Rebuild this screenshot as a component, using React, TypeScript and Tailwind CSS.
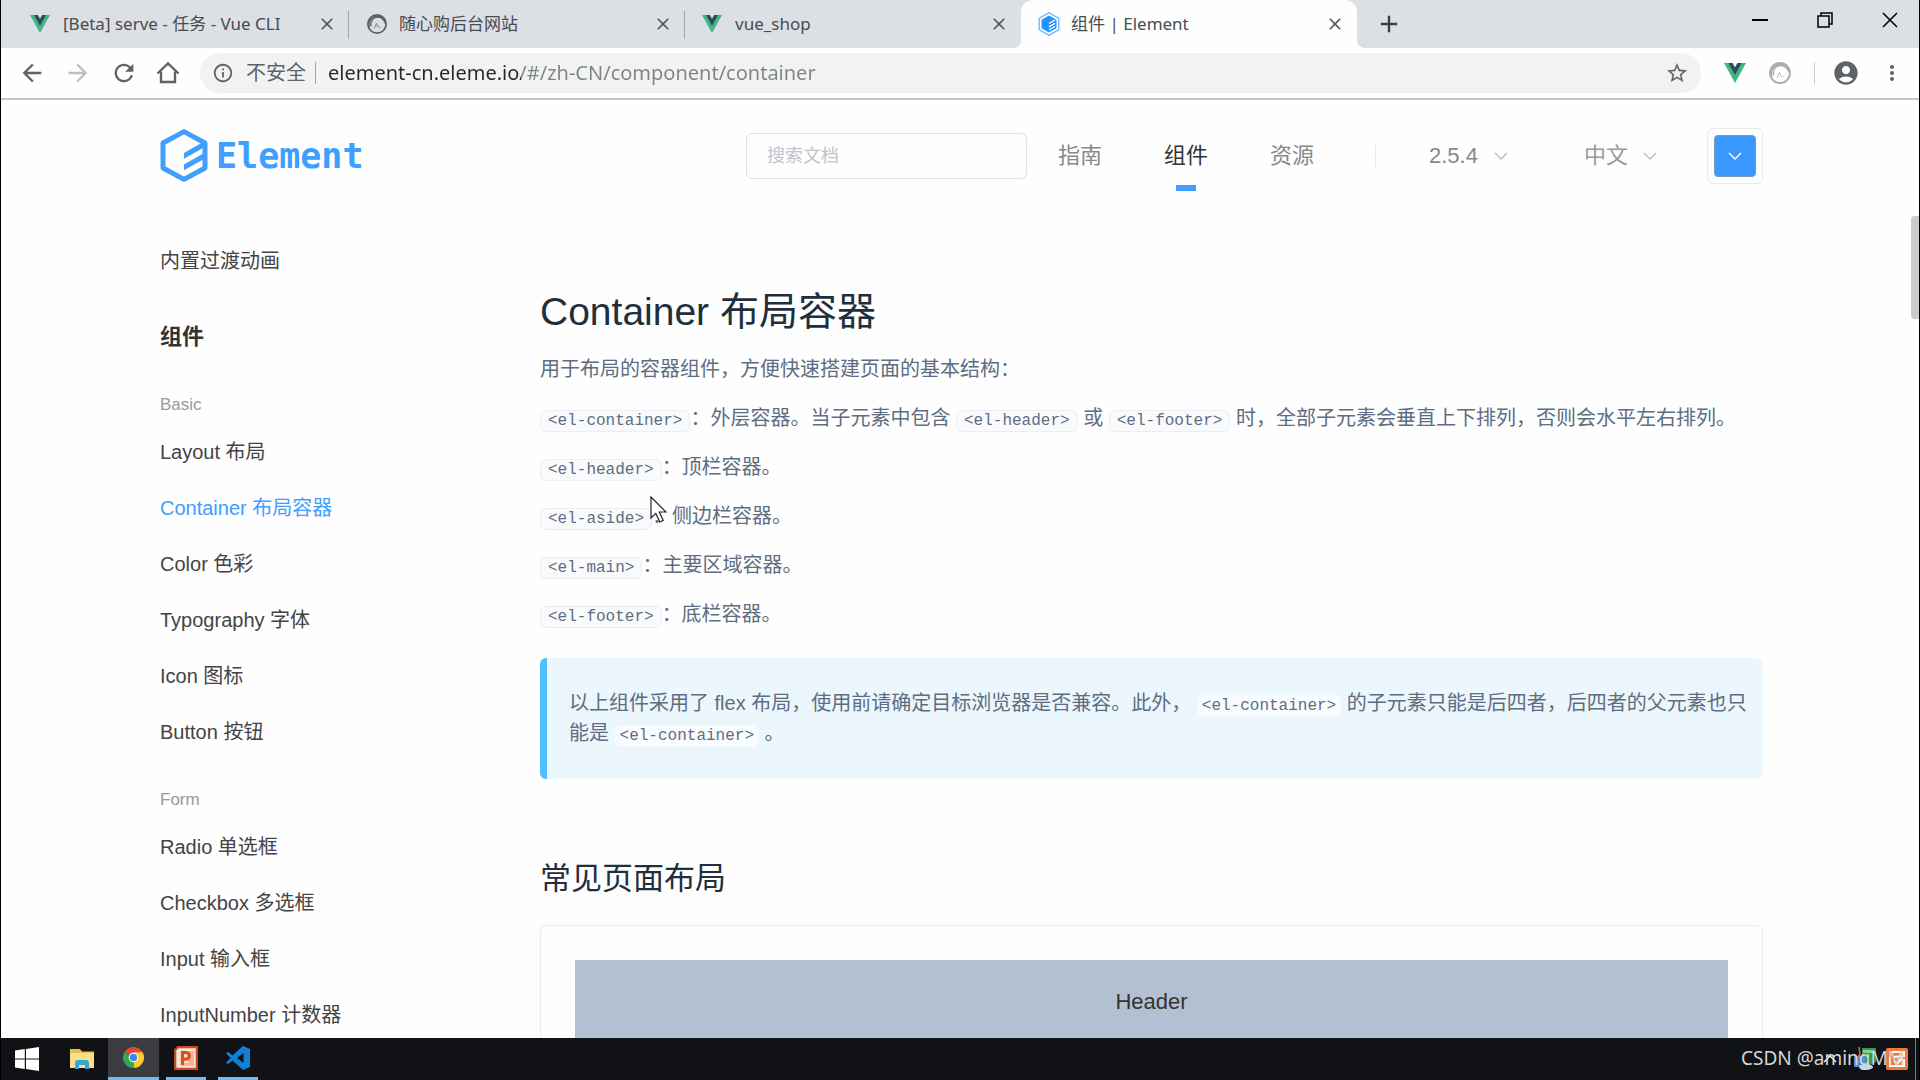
import React from "react";

import {
    MdAccountCircle,
    MdAdd,
    MdArrowBack,
    MdArrowForward,
    MdClose,
    MdInfoOutline,
    MdMoreVert,
    MdRefresh,
    MdStarBorder,
} from "react-icons/md";
import clsx from "clsx";

type IconProps = { className?: string };

const VueIcon: React.FC<IconProps> = ({ className }) => (
    <svg viewBox="0 0 24 21" preserveAspectRatio="none" className={className} aria-hidden="true">
        <path d="M0 0h9.2L12 4.8 14.8 0H24L12 21Z" fill="#41b883" />
        <path d="M4.8 0h4.4L12 4.8 14.8 0h4.4L12 12.6Z" fill="#35495e" />
    </svg>
);

const SwirlIcon: React.FC<IconProps> = ({ className }) => (
    <svg viewBox="0 0 24 24" fill="none" stroke="currentColor" strokeLinecap="round" className={className} aria-hidden="true">
        <circle cx="12" cy="12" r="10" strokeWidth="1.8" />
        <path d="M3.5 15C2 8 7 3 13 3.500c5 .5 7.500 4 8 7.500" strokeWidth="1.6" />
        <path d="M5.500 14c-1-5 2-9.500 7-9.500 4-.3 6 2 8 5" strokeWidth="1.4" />
        <path d="M9 16.500l2.500-5 1.500 4M14.500 15l1 1" strokeWidth=".8" />
    </svg>
);

const ElementIcon: React.FC<IconProps> = ({ className }) => (
    <svg viewBox="0 0 22 24" className={className} aria-hidden="true">
        <path d="M11 .8 20.800 6.300v11.400L11 23.200 1.200 17.700V6.300Z" fill="#fff" stroke="#59adff" strokeWidth="1.2" />
        <path d="M11 3.500 18.500 7.700v8.600L11 20.500 3.500 16.300V7.700Z" fill="#2492ff" />
        <path d="M11 11.500 17 8M11 14.800l6-3.500M11 18l6-3.500" stroke="#fff" strokeWidth="1.400" />
    </svg>
);

const HomeIcon: React.FC<IconProps> = ({ className }) => (
    <svg viewBox="0 0 24 24" fill="none" stroke="currentColor" strokeWidth="2.400" className={className} aria-hidden="true">
        <path d="M1.500 12.500 12 2.500l10.500 10" />
        <path d="M5 10.500V21h14V10.500" />
    </svg>
);

const LogoMark: React.FC<IconProps> = ({ className }) => (
    <svg viewBox="0 0 48 54" fill="none" className={className} aria-hidden="true">
        <path d="M24 2.600 45 14v25L24 50.400 3 39V14Z" stroke="#409eff" strokeWidth="5" strokeLinejoin="round" />
        <path d="M24 24 44 12.500v6L24 29.700ZM24 35.500 44 24v6L24 41.300Z" fill="#409eff" />
    </svg>
);

const ChevronIcon: React.FC<IconProps> = ({ className }) => (
    <svg viewBox="0 0 14 8" fill="none" stroke="currentColor" strokeWidth="1.400" className={className} aria-hidden="true">
        <path d="M1 1l6 6 6-6" />
    </svg>
);

const WindowsIcon = () => (
    <svg viewBox="0 0 24 24" className="h-6 w-6" fill="#fff" aria-hidden="true">
        <path d="M0 3.500 9.800 2.100v9.300H0ZM11 1.900 24 0v11.400H11ZM0 12.600h9.800v9.300L0 20.500ZM11 12.600h13V24l-13-1.900Z" />
    </svg>
);

const FolderIcon = () => (
    <svg viewBox="0 0 24 22" className="h-[22px] w-6" aria-hidden="true">
        <path d="M0 1h10l2 2.500h12V20H0Z" fill="#e9bf4b" />
        <path d="M0 5h24v15H0Z" fill="#fbe08a" />
        <path d="M5 21v-6q0-3 3-3h8q3 0 3 3v6h-4v-4H9v4Z" fill="#35a5d8" />
    </svg>
);

const ChromeIcon = () => (
    <svg viewBox="0 0 24 24" className="h-[21px] w-[21px]" aria-hidden="true">
        <path d="M12 12 1.600 6A12 12 0 0 1 22.400 6Z" fill="#e3473a" />
        <path d="M12 12 22.400 6A12 12 0 0 1 12 24Z" fill="#fccb31" />
        <path d="M12 12v12A12 12 0 0 1 1.600 6Z" fill="#35a553" />
        <path d="M12 6h10.400L17.200 15 12 24l3-9Z" fill="#fccb31" />
        <circle cx="12" cy="12" r="5.500" fill="#fff" />
        <circle cx="12" cy="12" r="4.300" fill="#4286f4" />
    </svg>
);

const PowerpointIcon = () => (
    <svg viewBox="0 0 24 24" className="h-6 w-6" aria-hidden="true">
        <path d="M4 1.200h18.800v21.600H1.200V4Z" fill="#fbe3d8" stroke="#cf4a1f" strokeWidth="2.200" />
        <path d="M14 5h6v15H7v-3h7Z" fill="#f4b496" />
        <path d="M8.500 19V6.500h3.500a3.300 3.300 0 0 1 0 6.600H8.500" fill="none" stroke="#d8501f" strokeWidth="3.200" />
    </svg>
);

const VscodeIcon = () => (
    <svg viewBox="0 0 24 24" className="h-6 w-6" aria-hidden="true">
        <path d="M17 0l7 3v18l-7 3L6.500 14.400 2.200 18 0 16.800 4.600 12 0 7.200 2.200 6l4.300 3.600ZM17.500 7 11 12l6.500 5Z" fill="#1380d8" />
    </svg>
);

const tabs = [
    { title: "[Beta] serve - 任务 - Vue CLI", icon: <VueIcon className="h-[18px] w-5" />, divider: true },
    { title: "随心购后台网站", icon: <SwirlIcon className="h-[22px] w-[22px] text-[#5b5e63]" />, divider: true },
    { title: "vue_shop", icon: <VueIcon className="h-[18px] w-5" /> },
    { title: "组件 | Element", icon: <ElementIcon className="h-6 w-[22px]" />, active: true },
];

const basicLinks = [
    "Layout 布局",
    "Container 布局容器",
    "Color 色彩",
    "Typography 字体",
    "Icon 图标",
    "Button 按钮",
];

const formLinks = [
    "Radio 单选框",
    "Checkbox 多选框",
    "Input 输入框",
    "InputNumber 计数器",
];

const TabStrip = () => (
    <div className="flex h-12 shrink-0 bg-[#dcdfe4] pl-3">
        {tabs.map((tab) => (
            <div
                key={tab.title}
                className={clsx(
                    "relative flex w-[336px] min-w-0 items-center pr-3 pl-[17px]",
                    tab.active && "rounded-t-xl bg-[#fdfefd]"
                )}
            >
                {tab.active && (
                    <>
                        <span className="absolute bottom-0 -left-2 size-2 bg-[radial-gradient(circle_at_0_0,transparent_8px,#fdfefd_8px)]" />
                        <span className="absolute -right-2 bottom-0 size-2 bg-[radial-gradient(circle_at_100%_0,transparent_8px,#fdfefd_8px)]" />
                    </>
                )}
                <span className="flex w-[22px] shrink-0">{tab.icon}</span>
                <span className="ml-[11px] flex-1 truncate text-[17px] leading-6 text-[#484b50]">{tab.title}</span>
                <button type="button" aria-label="关闭标签页" className="text-[#55585c]">
                    <MdClose className="size-5" />
                </button>
                {tab.divider && <span className="absolute top-[11px] right-0 h-7 w-px bg-[#a3a6aa]" />}
            </div>
        ))}
        <button type="button" aria-label="新标签页" className="ml-[18px] text-[#3c4043]">
            <MdAdd className="size-7" />
        </button>
        <div className="ml-auto flex h-10 items-center gap-[49px] pr-[21px] text-black">
            <button type="button" aria-label="最小化" className="flex size-4 items-center">
                <span className="h-[2px] w-full bg-black" />
            </button>
            <button type="button" aria-label="还原">
                <svg viewBox="0 0 16 16" fill="none" stroke="currentColor" strokeWidth="1.500" className="size-4">
                    <path d="M1 4h11v11H1ZM4 4V1h11v11h-3" />
                </svg>
            </button>
            <button type="button" aria-label="关闭">
                <svg viewBox="0 0 16 16" stroke="currentColor" strokeWidth="1.500" className="size-4">
                    <path d="M1 1l14 14M15 1 1 15" />
                </svg>
            </button>
        </div>
    </div>
);

const Toolbar = () => (
    <div className="flex h-[52px] shrink-0 items-center border-b-2 border-[#c6c8c7] pr-[15px] pl-[17px] text-[#5f6368]">
        <div className="flex items-center gap-[18px]">
            <button type="button" aria-label="后退"><MdArrowBack className="size-7" /></button>
            <button type="button" aria-label="前进" className="text-[#bcbec0]"><MdArrowForward className="size-7" /></button>
            <button type="button" aria-label="重新加载"><MdRefresh className="size-7" /></button>
            <button type="button" aria-label="主页"><HomeIcon className="size-6" /></button>
        </div>
        <div className="ml-[20px] flex h-10 flex-1 items-center rounded-full bg-[#f1f3f3] pr-3 pl-3">
            <MdInfoOutline className="size-[22px]" />
            <span className="ml-3 text-[20px] leading-7">不安全</span>
            <span className="ml-[9px] h-[22px] w-px bg-[#a3a6aa]" />
            <input
                type="text"
                aria-label="地址栏"
                defaultValue="element-cn.eleme.io/#/zh-CN/component/container"
                className="ml-3 min-w-0 flex-1 bg-[linear-gradient(90deg,#26282b_193px,#808386_193px)] bg-clip-text text-[20px] leading-7 text-transparent outline-none"
            />
            <button type="button" aria-label="收藏"><MdStarBorder className="size-6" /></button>
        </div>
        <VueIcon className="ml-[23px] h-5 w-[22px]" />
        <SwirlIcon className="ml-[22px] size-6 text-[#a9abad]" />
        <span className="ml-[22px] h-[22px] w-px bg-[#c9cbcc]" />
        <button type="button" aria-label="用户" className="ml-[17px]"><MdAccountCircle className="size-7" /></button>
        <button type="button" aria-label="菜单" className="ml-5"><MdMoreVert className="size-6" /></button>
    </div>
);

const SiteHeader = () => (
    <header className="flex h-28 items-center">
        <a href="#/zh-CN" className="flex items-center gap-2">
            <LogoMark className="h-[54px] w-12" />
            <span className="font-['DejaVu_Sans_Mono',monospace] text-[35px] leading-10 font-bold text-[#409eff]">Element</span>
        </a>
        <input
            type="text"
            aria-label="搜索文档"
            placeholder="搜索文档"
            className="ml-auto h-[46px] w-[281px] rounded-md border border-[#dcdfe6] px-5 text-[18px] outline-none placeholder:text-[#c0c4cc]"
        />
        <nav className="ml-[31px] flex items-center gap-[62px] text-[22px] leading-8 text-[#888]">
            <a href="#/zh-CN/guide">指南</a>
            <a href="#/zh-CN/component" className="relative text-[#333]">
                组件
                <span className="absolute top-[45px] left-1/2 h-[6px] w-5 -translate-x-1/2 bg-[#409eff]" />
            </a>
            <a href="#/zh-CN/resource">资源</a>
        </nav>
        <span className="ml-[61px] h-[22px] w-px bg-[#ebebeb]" />
        <label className="ml-[53px] flex items-center gap-[15px] text-[22px] leading-8 text-[#888]">
            <select aria-label="版本" className="w-[50px] appearance-none outline-none">
                <option>2.5.4</option>
            </select>
            <ChevronIcon className="h-2 w-[14px] text-[#bbb]" />
        </label>
        <label className="ml-[76px] flex items-center gap-[15px] text-[22px] leading-8 text-[#999]">
            <select aria-label="语言" className="w-11 appearance-none outline-none">
                <option>中文</option>
            </select>
            <ChevronIcon className="h-2 w-[14px] text-[#bbb]" />
        </label>
        <button type="button" aria-label="主题色" className="ml-[50px] flex size-14 items-center justify-center rounded-md border border-[#e8eaea]">
            <span className="flex size-[42px] items-center justify-center rounded-sm border border-[#7a97b8] bg-[#3a99ff]">
                <ChevronIcon className="h-2 w-[14px] text-white" />
            </span>
        </button>
    </header>
);

const NavGroup: React.FC<{ title: string, links: string[] }> = ({ title, links }) => (
    <div className="mt-5">
        <div className="text-[17px] leading-[39px] text-[#999]">{title}</div>
        {links.map((link) => (
            <a
                key={link}
                href="#/zh-CN/component"
                className={clsx(
                    "block text-[20px] leading-[56px]",
                    link.startsWith("Container") ? "text-[#409eff]" : "text-[#444]"
                )}
            >
                {link}
            </a>
        ))}
    </div>
);

const Sidebar = () => (
    <aside className="w-[380px] shrink-0 pt-[21px]">
        <a href="#/zh-CN/component/transition" className="block text-[20px] leading-[56px] text-[#444]">内置过渡动画</a>
        <div className="mt-5 text-[22px] leading-[56px] font-bold text-[#333]">组件</div>
        <NavGroup title="Basic" links={basicLinks} />
        <NavGroup title="Form" links={formLinks} />
    </aside>
);

const Code: React.FC<{ children: string, plain?: boolean }> = ({ children, plain }) => (
    <code
        className={clsx(
            "rounded-md border py-px font-['Liberation_Mono',monospace] text-[16px] leading-5 text-[#5e6d82]",
            plain ? "border-[#f6fbff] bg-[#f9fcff] px-1" : "border-[#eaeefb] bg-[#f9fafc] px-[7px]"
        )}
    >
        {children}
    </code>
);

const Content = () => (
    <main className="min-w-0 flex-1 pt-[71px] text-[20px] text-[#5e6d82]">
        <h1 className="text-[39px] leading-[58px] text-[#1f2f3d]">Container 布局容器</h1>
        <div className="mt-[14px] flex flex-col gap-5 leading-[29px]">
            <p>用于布局的容器组件，方便快速搭建页面的基本结构：</p>
            <p>
                <Code>{"<el-container>"}</Code>：外层容器。当子元素中包含 <Code>{"<el-header>"}</Code> 或 <Code>{"<el-footer>"}</Code> 时，全部子元素会垂直上下排列，否则会水平左右排列。
            </p>
            <p><Code>{"<el-header>"}</Code>：顶栏容器。</p>
            <p><Code>{"<el-aside>"}</Code>：侧边栏容器。</p>
            <p><Code>{"<el-main>"}</Code>：主要区域容器。</p>
            <p><Code>{"<el-footer>"}</Code>：底栏容器。</p>
        </div>
        <div className="mt-[29px] rounded-md border-l-[7px] border-[#50bfff] bg-[#ebf6fd] pt-[30px] pr-2 pb-[31px] pl-[22px] leading-[30px]">
            以上组件采用了 flex 布局，使用前请确定目标浏览器是否兼容。此外， <Code plain>{"<el-container>"}</Code> 的子元素只能是后四者，后四者的父元素也只能是 <Code plain>{"<el-container>"}</Code> 。
        </div>
        <h2 className="mt-[77px] text-[31px] leading-[46px] text-[#1f2f3d]">常见页面布局</h2>
        <div className="mt-[23px] rounded-md border border-[#ebebeb] p-[34px]">
            <div className="bg-[#b3c0d1] text-center text-[22px] leading-[84px] text-[#333]">Header</div>
        </div>
    </main>
);

const Taskbar = () => (
    <footer className="relative flex h-[42px] shrink-0 items-stretch bg-[#101215]">
        <button type="button" aria-label="开始" className="flex w-[51px] items-center justify-center"><WindowsIcon /></button>
        <button type="button" aria-label="文件资源管理器" className="ml-1 flex w-[52px] items-center justify-center"><FolderIcon /></button>
        <button type="button" aria-label="Chrome" className="flex w-[51px] items-center justify-center border-b-[3px] border-[#76b9ed] bg-[#3a3c3f]"><ChromeIcon /></button>
        <button type="button" aria-label="PowerPoint" className="ml-[7px] flex w-10 items-center justify-center border-b-[3px] border-[#76b9ed]"><PowerpointIcon /></button>
        <button type="button" aria-label="VS Code" className="ml-3 flex w-10 items-center justify-center border-b-[3px] border-[#76b9ed]"><VscodeIcon /></button>
        <div className="ml-auto flex items-center">
            <ChevronIcon className="h-2 w-4 rotate-180 text-white" />
            <svg viewBox="0 0 24 24" className="ml-[15px] size-6" aria-hidden="true">
                <path d="M9 1h14v14l-6 3-8-5Z" fill="#2f9a50" />
                <path d="M10 3h11v3H10Z" fill="#7fd08f" />
                <rect x="1" y="9" width="12" height="11" rx="1" fill="#4b8fdd" />
                <path d="M6 0l1 7-3 5" stroke="#e06a28" strokeWidth="1.500" fill="none" />
                <ellipse cx="13" cy="20" rx="7" ry="3" fill="#c6d5e8" />
            </svg>
            <svg viewBox="0 0 22 22" className="ml-[9px] size-[22px]" aria-hidden="true">
                <rect width="22" height="22" rx="2" fill="#f0793a" />
                <path d="M4 4h14v4L8 9M4 9v9h14v-7M8 13l3 3 5-6" stroke="#fff" strokeWidth="2" fill="none" />
            </svg>
            <span className="ml-[7px] h-full w-px bg-[#77797b]" />
            <span className="w-[3px]" />
        </div>
        <span className="absolute top-[6px] right-[14px] font-['Noto_Sans','Noto_Sans_CJK_SC',sans-serif] text-[19px] leading-7 text-[#d5d5d5]">
            CSDN @amingMM
        </span>
    </footer>
);

export default function App() {
    return (
        <div className="relative flex h-screen flex-col overflow-hidden border-x border-black bg-[#fdfefd] font-['Noto_Sans','Noto_Sans_CJK_SC',sans-serif]">
            <TabStrip />
            <Toolbar />
            <div className="relative min-h-0 flex-1 overflow-hidden pr-[156px] pl-[159px] font-['Liberation_Sans','Noto_Sans_CJK_SC',sans-serif]">
                <SiteHeader />
                <div className="flex">
                    <Sidebar />
                    <Content />
                </div>
                <span className="absolute top-[116px] right-0 h-[103px] w-2 rounded-l-sm bg-[#c9cbcc]" />
            </div>
            <Taskbar />
            {/* mouse pointer */}
            <svg viewBox="0 0 17 27" className="pointer-events-none absolute top-[496px] left-[649px] h-[27px] w-[17px]" aria-hidden="true">
                <path d="M1 1v21l4.800-4.600 4 8.600 3.400-1.600-3.800-8.400H16Z" fill="#fff" stroke="#222" strokeWidth="1.200" />
            </svg>
        </div>
    );
}
